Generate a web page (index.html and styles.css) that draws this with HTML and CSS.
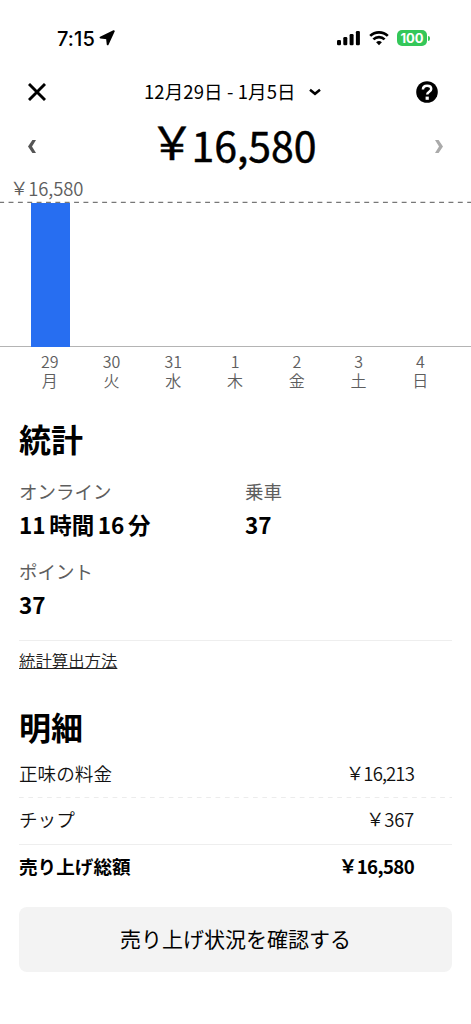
FILE: index.html
```html
<!DOCTYPE html>
<html lang="ja">
<head>
<meta charset="utf-8">
<meta name="viewport" content="width=device-width, initial-scale=1">
<title>売り上げ</title>
<link rel="stylesheet" href="styles.css">
</head>
<body>
<div class="screen">
  <div class="status">
    <span class="clock">7:15</span>
    <svg class="loc" width="16" height="16" viewBox="0 0 16 16"><path d="M14.800 1.200 8.700 14.300 8 8.200 1.500 7.500z" stroke="#000" stroke-width="1.900" stroke-linejoin="round"/></svg>
    <svg class="signal" width="24" height="16" viewBox="0 0 24 16"><rect x="0" y="10" width="4" height="5.300" rx="1.200"/><rect x="6.300" y="7" width="4" height="8.300" rx="1.200"/><rect x="12.600" y="4" width="4" height="11.300" rx="1.200"/><rect x="18.900" y="1" width="4" height="14.300" rx="1.200"/></svg>
    <svg class="wifi" width="20" height="16" viewBox="0 0 20 16" fill="none" stroke="#000" stroke-width="2.700"><path d="M1.200 5.900a12.600 12.600 0 0 1 17.600 0"/><path d="M4.400 9.400a8 8 0 0 1 11.200 0"/><path d="M10 15.300 7.100 12.300a4.200 4.200 0 0 1 5.800 0z" fill="#000" stroke="none"/></svg>
    <span class="battery"><span class="level">100</span><i class="cap"></i></span>
  </div>

  <header class="topbar">
    <svg class="close" width="18" height="18" viewBox="0 0 18 18" fill="none" stroke="#000" stroke-width="2.900"><path d="m1 1 16 16M17 1 1 17"/></svg>
    <div class="range"><span>12月29日 - 1月5日</span><svg width="12" height="8" viewBox="0 0 12 8" fill="none" stroke="#000" stroke-width="2.500"><path d="m1 1.800 5 4 5-4"/></svg></div>
    <svg class="help" width="22" height="22" viewBox="0 0 22 22"><circle cx="11" cy="11" r="10.800"/><path d="M6.900 8.500C7 6.100 8.700 4.800 11.100 4.800c2.500 0 4.100 1.200 4.100 3.200 0 3-4 2.500-4 5.600" fill="none" stroke="#fff" stroke-width="2.500"/><rect x="9.600" y="15.600" width="3.200" height="3.200" fill="#fff"/></svg>
  </header>

  <div class="total">
    <svg width="8" height="13" viewBox="0 0 8 13" fill="#555"><path d="M4.400 0H8L4 6.500 8 13H4.400L0 6.500z"/></svg>
    <span class="amount"><span class="sign">￥</span>16,580</span>
    <svg width="8" height="13" viewBox="0 0 8 13" fill="#aaa"><path d="M3.600 0H0l4 6.500L0 13h3.600L8 6.500z"/></svg>
  </div>

  <section class="chart">
    <div class="peak"><span class="sign">￥</span>16,580</div>
    <svg class="guide" width="471" height="2" viewBox="0 0 471 2"><path d="M-.8 1.300H471" stroke="#777" stroke-width="1.300" stroke-dasharray="4.900 4.460"/></svg>
    <div class="plot"><div class="bar"></div></div>
    <div class="axis">
      <div class="day"><span>29</span><span>月</span></div>
      <div class="day"><span>30</span><span>火</span></div>
      <div class="day"><span>31</span><span>水</span></div>
      <div class="day"><span>1</span><span>木</span></div>
      <div class="day"><span>2</span><span>金</span></div>
      <div class="day"><span>3</span><span>土</span></div>
      <div class="day"><span>4</span><span>日</span></div>
    </div>
  </section>

  <section class="stats">
    <h2>統計</h2>
    <div class="grid">
      <div class="stat"><span class="name">オンライン</span><b>11 時間 16 分</b></div>
      <div class="stat"><span class="name">乗車</span><b>37</b></div>
      <div class="stat"><span class="name">ポイント</span><b>37</b></div>
    </div>
    <a class="method">統計算出方法</a>
  </section>

  <section class="details">
    <h2>明細</h2>
    <div class="row"><span>正味の料金</span><span class="yen tight"><span class="sign">￥</span>16,213</span></div>
    <svg class="dashed" width="433" height="1" viewBox="0 0 433 1"><path d="M0 .5h433" stroke="#ececec" stroke-dasharray="4.700 4.660"/></svg>
    <div class="row low"><span>チップ</span><span class="yen"><span class="sign">￥</span>367</span></div>
    <div class="solid"></div>
    <div class="row low sum"><span>売り上げ総額</span><span class="yen"><span class="sign">￥</span>16,580</span></div>
  </section>

  <button class="action">売り上げ状況を確認する</button>
</div>
</body>
</html>
```
FILE: styles.css
```css
* { box-sizing: border-box; }
body {
  margin: 0;
  background: #fff;
  color: #000;
  font-family: "Noto Sans CJK JP", sans-serif;
}
svg { display: block; flex: none; }
.screen { width: 471px; height: 1024px; display: flex; flex-direction: column; overflow: hidden; }
.sign { line-height: 1; vertical-align: .05em; }

.status { height: 68px; padding: 8px 41px 0 57px; display: flex; align-items: center; }
.clock { padding-top: 1px; font: 500 20px/24px Inter, sans-serif; letter-spacing: .1px; }
.loc { margin-left: 4px; }
.signal { margin-left: auto; }
.wifi { margin-left: 8px; }
.battery { display: flex; align-items: center; margin-left: 8px; }
.level {
  width: 30px; height: 16px; border-radius: 5px; background: #34c759; color: #fff;
  font: 700 13px/16px Inter, sans-serif; text-align: center;
}
.cap { width: 2px; height: 5px; margin-left: 1px; border-radius: 0 2px 2px 0; background: #34c759; }

.topbar { height: 48px; padding: 0 33px 0 28px; display: flex; align-items: center; }
.range { display: flex; align-items: center; gap: 13px; margin: -2px 0 0 98px; font-size: 18.5px; line-height: 24px; letter-spacing: .1px; white-space: nowrap; }
.range svg { margin-top: 2px; }
.help { margin-left: auto; }

.total { height: 60px; padding: 0 28px; display: flex; align-items: center; justify-content: space-between; }
.amount { margin: -4px 1px 0 0; font-size: 41px; line-height: 60px; font-weight: 400; -webkit-text-stroke: .5px #000; white-space: nowrap; }
.amount .sign { display: inline-block; width: 42px; font-size: 45px; margin-left: -4px; }

.chart { height: 216px; color: #5e5e5e; }
.peak { height: 25px; padding-left: 10px; font-size: 18.5px; line-height: 24px; font-weight: 350; letter-spacing: -.15px; }
.guide { height: 2px; }
.plot { height: 144px; padding-left: 31px; border-bottom: 1px solid #b4b4b4; display: flex; }
.bar { width: 39px; height: 144px; background: #276ef1; }
.axis { display: grid; grid-template-columns: repeat(7, 61.75px); margin: 5px 0 0 19px; }
.day { display: flex; flex-direction: column; align-items: center; font-size: 16px; line-height: 19px; font-weight: 350; }

h2 { margin: 0; font-size: 32px; line-height: 40px; font-weight: 700; }
.stats { height: 301px; padding: 26px 19px 0; }
.grid { display: grid; grid-template-columns: 226px 1fr; height: 183px; grid-auto-rows: 80px; padding-top: 21px; border-bottom: 1px solid #eee; }
.stat { display: flex; flex-direction: column; }
.name { font-size: 18.5px; line-height: 24px; color: #5e5e5e; }
.stat b { font-size: 22.5px; line-height: 32px; margin-top: 5px; word-spacing: -1.5px; white-space: nowrap; }
.method { display: inline-block; margin-top: 7px; font-size: 16.4px; line-height: 24px; font-weight: 350; color: #222; text-decoration: underline; }

.details { height: 214px; padding: 13px 19px 0; }
.details h2 { margin-bottom: 4px; }
.row { height: 46px; padding: 0 38px 1px 0; display: flex; justify-content: space-between; align-items: center; font-size: 18.6px; line-height: 24px; font-weight: 350; color: #111; }
.row.low { padding-bottom: 4px; }
.details .dashed { margin-top: 1px; }
.yen { letter-spacing: -.3px; }
.tight { letter-spacing: -.9px; }
.solid { height: 1px; background: #eee; }
.row.sum { color: #000; font-weight: 700; }
.sum .yen { letter-spacing: -.6px; }

.action {
  width: 433px; height: 65px; margin: 0 0 0 19px; padding: 0 0 3px; border: 0; border-radius: 8px;
  background: #f3f3f3; color: #000; font: 400 21px/30px "Noto Sans CJK JP", sans-serif;
}
```
